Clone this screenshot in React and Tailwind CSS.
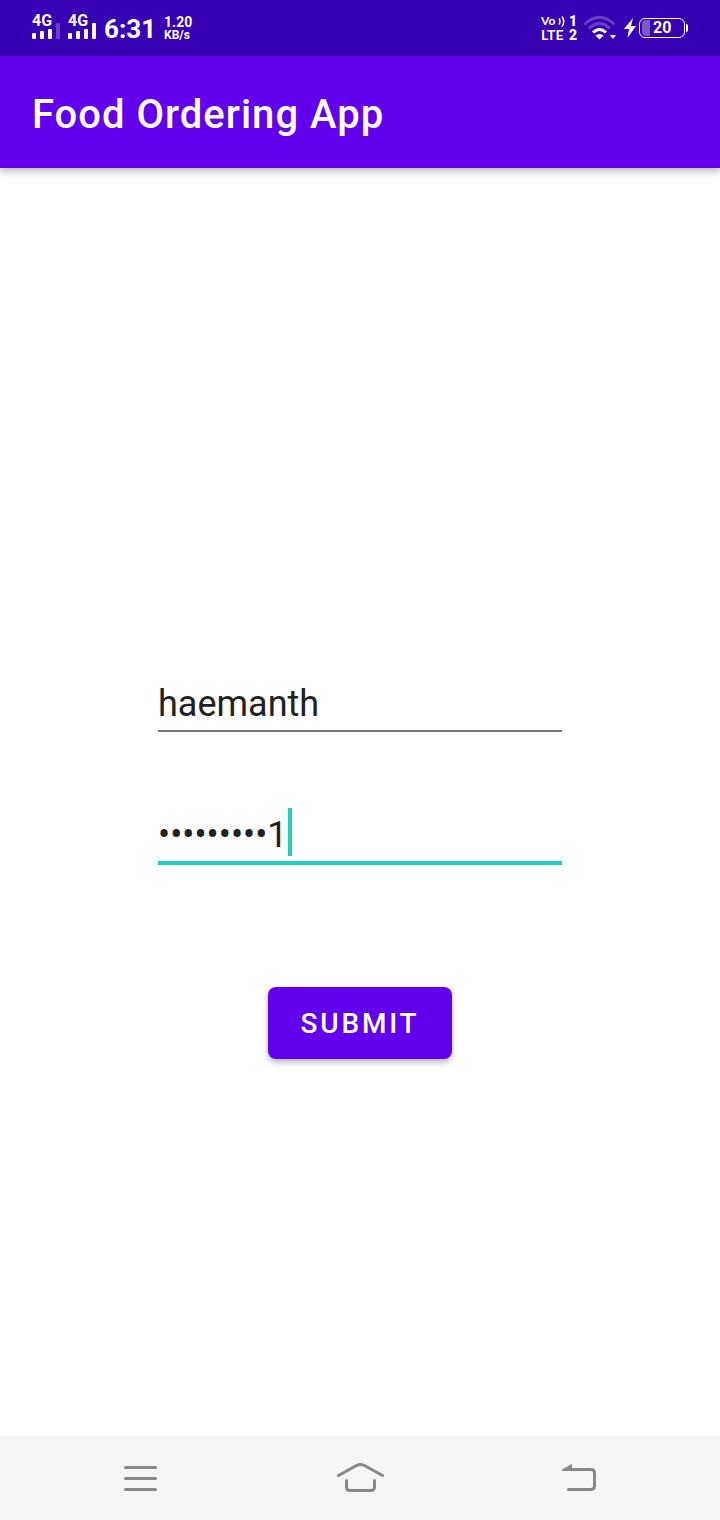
function SignalBars({ full }) {
  return (
    <div className="flex w-7 flex-col">
      <span className="text-base leading-4 font-bold">4G</span>
      <svg className="-mt-1.5 h-4 w-7" viewBox="0 0 28 16" fill="currentColor" aria-hidden="true">
        <rect x="0" y="10" width="4" height="6" rx="1" />
        <rect x="8" y="8" width="4" height="8" rx="1" />
        <rect x="16" y="6" width="4" height="10" rx="1" />
        <rect x="24" y="0" width="4" height="16" rx="1" opacity={full ? 1 : 0.25} />
      </svg>
    </div>
  );
}

function VolteBadge() {
  return (
    <div className="flex w-9 flex-col font-[Lato,sans-serif] text-sm leading-3.5 font-bold">
      <div className="flex items-center justify-between">
        <span className="text-xs leading-3.5">Vo</span>
        <svg className="h-3 w-2" viewBox="0 0 8 12" fill="none" stroke="currentColor" strokeWidth="1.5" aria-hidden="true">
          <path d="M1 3.500q2 3 0 6M4 1.500q3.500 5 0 10" />
        </svg>
        <span className="font-[Roboto,sans-serif] font-black">1</span>
      </div>
      <div className="flex items-center justify-between">
        <span>LTE</span>
        <span className="font-[Roboto,sans-serif] font-black">2</span>
      </div>
    </div>
  );
}

function StatusBar() {
  return (
    <div className="flex h-14 items-center justify-between bg-[#3700b3] px-8 text-white">
      <div className="flex items-center">
        <div className="flex gap-2 pb-1">
          <SignalBars />
          <SignalBars full />
        </div>
        <span className="ml-2 pt-0.5 text-[26px] leading-8 font-bold">6:31</span>
        <div className="ml-2 flex flex-col pt-0.5">
          <span className="text-sm leading-[13px] font-bold">1.20</span>
          <span className="text-xs leading-[13px] font-bold">KB/s</span>
        </div>
      </div>
      <div className="flex items-center">
        <VolteBadge />
        <svg className="ml-[7px] h-7 w-8" viewBox="0 0 32 28" fill="none" stroke="currentColor" aria-label="Wi-Fi" role="img">
          <g strokeWidth="3">
            <path d="M.5 10.500Q15.500 -4 30.500 10.500" opacity=".25" />
            <path d="M5 14.500Q15.500 4.500 26 14.500" opacity=".25" />
            <path d="M9 18.500Q15.500 12.500 22 18.500" />
          </g>
          <path d="M11.500 21.500q4-3 8 0l-4 4zM26 21h6l-3 4z" fill="currentColor" stroke="none" />
        </svg>
        <svg className="ml-2 h-5 w-3" viewBox="0 0 12 20" fill="currentColor" aria-label="Charging" role="img">
          <path d="M9 0 0 11h5L3.500 20 12 8H7z" />
        </svg>
        <div className="ml-[3px] flex items-center">
          <div className="flex h-5 w-[46px] items-center gap-[3px] rounded-md border border-white px-0.5">
            <span className="h-4 w-2 rounded-l-sm bg-white/35" />
            <span className="text-base leading-4 font-bold">20</span>
          </div>
          <span className="ml-px h-2 w-0.5 rounded-r-sm bg-white" />
        </div>
      </div>
    </div>
  );
}

function LoginForm() {
  return (
    <form className="flex w-[404px] max-w-full flex-col" onSubmit={(e) => e.preventDefault()}>
      <input
        aria-label="Username"
        type="text"
        defaultValue="haemanth"
        className="h-14 w-full border-b-2 border-[#757575] pt-0.5 text-4xl leading-10 text-[#212121] outline-none"
      />
      <label className="mt-[72px] flex h-[61px] cursor-text items-start border-b-4 border-[#1fd0bf]">
        <input
          aria-label="Password"
          type="text"
          autoComplete="off"
          defaultValue="•••••••••1"
          className="h-[52px] field-sizing-content pt-2.5 text-4xl leading-10 text-[#212121] caret-transparent outline-none"
        />
        <span className="mt-1 h-12 w-1 bg-[#1fd0bf]" />
      </label>
      <button
        type="submit"
        className="mt-[122px] h-[72px] self-center rounded-lg bg-[#6200ee] px-[33px] pt-0.5 text-[28px] leading-8 font-medium tracking-widest text-white uppercase shadow-[0_3px_6px_rgba(0,0,0,0.3)]"
      >
        Submit
      </button>
    </form>
  );
}

function NavigationBar() {
  return (
    <nav className="flex h-21 items-center justify-around bg-[#f5f5f5] px-8 text-[#888888]">
      <button type="button" aria-label="Recent apps">
        <svg className="h-8 w-12" viewBox="0 0 48 32" fill="none" stroke="currentColor" strokeWidth="3" strokeLinecap="round">
          <path d="M8.500 5.500h30M8.500 16.500h30M8.500 27.500h30" />
        </svg>
      </button>
      <button type="button" aria-label="Home">
        <svg className="h-8 w-12" viewBox="0 0 48 32" fill="none" stroke="currentColor" strokeWidth="3" strokeLinecap="round">
          <path d="M2.500 13.500 20.500 3.500q4-2 8 0l18 10M10.500 18.500V25q0 3.500 3.500 3.500h21q3.500 0 3.500-3.500v-6.500" />
        </svg>
      </button>
      <button type="button" aria-label="Back">
        <svg className="h-8 w-12" viewBox="0 0 48 32" fill="none" stroke="currentColor" strokeWidth="3" strokeLinecap="round">
          <path d="M10 7.500h26q3.500 0 3.500 3.500v13q0 3.500-3.500 3.500H13.500" />
          <path d="M7 9V7.500L17 2v5z" fill="currentColor" stroke="none" />
        </svg>
      </button>
    </nav>
  );
}

export default function App() {
  return (
    <div className="flex min-h-screen flex-col bg-white font-[Roboto,sans-serif]">
      <StatusBar />
      <header className="z-10 flex h-28 items-center bg-[#6200ee] px-8 pt-1.5 shadow-[0_3px_8px_rgba(0,0,0,0.3)]">
        <h1 className="text-[40px] leading-12 font-medium tracking-wide text-white">Food Ordering App</h1>
      </header>
      <main className="flex flex-1 flex-col items-center justify-center px-6 pt-[130px]">
        <LoginForm />
      </main>
      <NavigationBar />
    </div>
  );
}
